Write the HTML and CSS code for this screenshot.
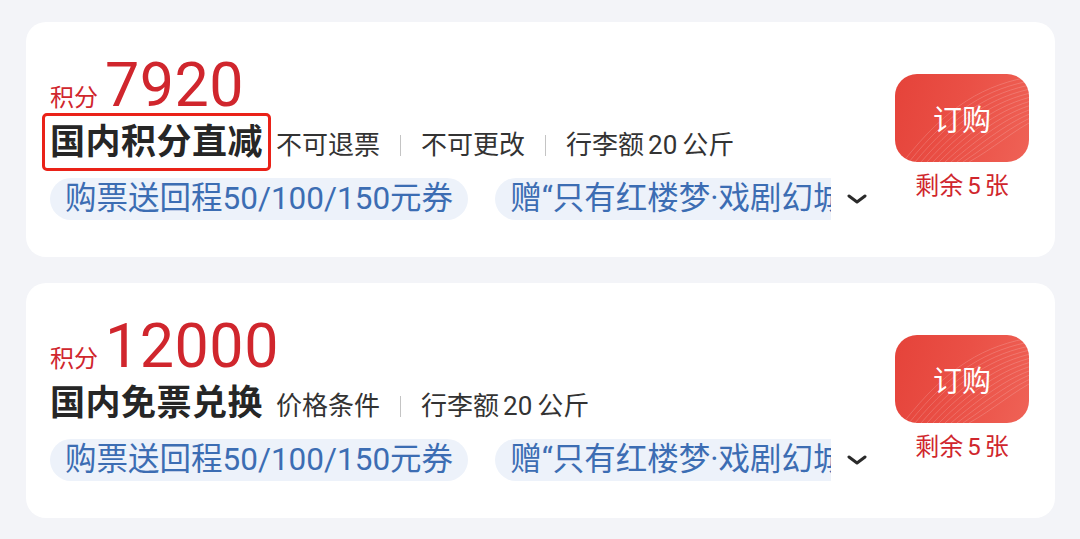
FILE: index.html
```html
<!DOCTYPE html>
<html lang="zh-CN">
<head>
<meta charset="utf-8">
<title>积分兑换</title>
<link rel="stylesheet" href="styles.css">
</head>
<body>
<div class="list">
  <div class="card">
    <div class="main">
      <div class="price"><span class="unit">积分</span><span class="num">7920</span></div>
      <div class="title-row">
        <span class="title marked">国内积分直减</span>
        <span class="rules">不可退票<i class="sep"></i>不可更改<i class="sep"></i>行李额<span class="n">20</span>公斤</span>
      </div>
      <div class="tags-row">
        <div class="tags">
          <span class="tag">购票送回程50/100/150元券</span>
          <span class="tag">赠“只有红楼梦·戏剧幻城”门票</span>
        </div>
        <svg class="chev" viewBox="0 0 20 10" width="20" height="10"><polyline points="2,2 10,8 18,2" fill="none" stroke="#2a2a2a" stroke-width="3" stroke-linecap="round" stroke-linejoin="round"/></svg>
      </div>
    </div>
    <div class="side">
      <div class="buy">
        <svg class="waves" viewBox="0 0 134 88" preserveAspectRatio="none">
          <g fill="none" stroke="#ffffff" stroke-opacity="0.22" stroke-width="0.8">
            <path d="M20 88 C60 40 95 18 140 10"/>
            <path d="M26 88 C64 44 98 22 140 14"/>
            <path d="M32 88 C68 48 101 26 140 18"/>
            <path d="M38 88 C72 52 104 30 140 22"/>
            <path d="M44 88 C76 56 107 34 140 26"/>
            <path d="M50 88 C80 60 110 38 140 30"/>
            <path d="M56 88 C84 64 113 42 140 34"/>
            <path d="M62 88 C88 68 116 46 140 38"/>
            <path d="M68 88 C92 72 119 50 140 42"/>
            <path d="M74 88 C96 76 122 54 140 46"/>
            <path d="M14 88 C56 36 92 14 140 6"/>
            <path d="M8 88 C52 32 89 10 140 2"/>
          </g>
        </svg>
        <span class="buy-label">订购</span>
      </div>
      <div class="remain">剩余<span class="n">5</span>张</div>
    </div>
  </div>

  <div class="card">
    <div class="main">
      <div class="price"><span class="unit">积分</span><span class="num">12000</span></div>
      <div class="title-row">
        <span class="title">国内免票兑换</span>
        <span class="rules">价格条件<i class="sep"></i>行李额<span class="n">20</span>公斤</span>
      </div>
      <div class="tags-row">
        <div class="tags">
          <span class="tag">购票送回程50/100/150元券</span>
          <span class="tag">赠“只有红楼梦·戏剧幻城”门票</span>
        </div>
        <svg class="chev" viewBox="0 0 20 10" width="20" height="10"><polyline points="2,2 10,8 18,2" fill="none" stroke="#2a2a2a" stroke-width="3" stroke-linecap="round" stroke-linejoin="round"/></svg>
      </div>
    </div>
    <div class="side">
      <div class="buy">
        <svg class="waves" viewBox="0 0 134 88" preserveAspectRatio="none">
          <g fill="none" stroke="#ffffff" stroke-opacity="0.22" stroke-width="0.8">
            <path d="M20 88 C60 40 95 18 140 10"/>
            <path d="M26 88 C64 44 98 22 140 14"/>
            <path d="M32 88 C68 48 101 26 140 18"/>
            <path d="M38 88 C72 52 104 30 140 22"/>
            <path d="M44 88 C76 56 107 34 140 26"/>
            <path d="M50 88 C80 60 110 38 140 30"/>
            <path d="M56 88 C84 64 113 42 140 34"/>
            <path d="M62 88 C88 68 116 46 140 38"/>
            <path d="M68 88 C92 72 119 50 140 42"/>
            <path d="M74 88 C96 76 122 54 140 46"/>
            <path d="M14 88 C56 36 92 14 140 6"/>
            <path d="M8 88 C52 32 89 10 140 2"/>
          </g>
        </svg>
        <span class="buy-label">订购</span>
      </div>
      <div class="remain">剩余<span class="n">5</span>张</div>
    </div>
  </div>
</div>
</body>
</html>
```

FILE: styles.css
```css
* {
  box-sizing: border-box;
  margin: 0;
  padding: 0;
}

html, body {
  width: 1080px;
  height: 539px;
  overflow: hidden;
}

body {
  background: #f3f4f8;
  font-family: "Roboto", "Noto Sans CJK SC", sans-serif;
  color: #333;
}

.list {
  display: flex;
  flex-direction: column;
  gap: 26px;
  padding: 22px 25px 0 26px;
}

.card {
  display: flex;
  height: 235px;
  background: #ffffff;
  border-radius: 20px;
  padding: 33px 26px 0 24px;
}

.main {
  flex: 1;
  min-width: 0;
  display: flex;
  flex-direction: column;
}

.price {
  display: flex;
  align-items: baseline;
  height: 60px;
  line-height: 60px;
  color: #d0262d;
}

.unit {
  font-size: 24px;
  font-family: "Noto Sans CJK SC", sans-serif;
}

.num {
  font-size: 61px;
  line-height: 60px;
  margin-left: 7px;
  font-weight: 400;
  letter-spacing: 0.5px;
}

.title-row {
  display: flex;
  align-items: baseline;
  margin-top: 4px;
  height: 40px;
  line-height: 40px;
}

.title {
  position: relative;
  font-size: 35px;
  font-weight: 700;
  color: #262626;
  letter-spacing: 0.5px;
  font-family: "Noto Sans CJK SC", sans-serif;
}

.title.marked::after {
  content: "";
  position: absolute;
  left: -8px;
  right: -8px;
  top: -6px;
  bottom: -12px;
  border: 3px solid #ea2218;
  border-radius: 5px;
}

.rules {
  margin-left: 13px;
  font-size: 26px;
  color: #333;
  white-space: nowrap;
}

.rules .n {
  margin: 0 5px 0 4px;
}

.sep {
  display: inline-block;
  width: 1px;
  height: 21px;
  background: #c4c4c4;
  margin: 0 20px;
  vertical-align: -2px;
}

.tags-row {
  display: flex;
  align-items: center;
  margin-top: 19px;
}

.tags {
  flex: 0 0 781px;
  display: flex;
  gap: 27px;
  overflow: hidden;
}

.tag {
  flex-shrink: 0;
  height: 42px;
  line-height: 42px;
  padding: 0 15px;
  border-radius: 21px;
  background: #edf2fa;
  color: #3c6db3;
  font-size: 31.5px;
  white-space: nowrap;
}

.chev {
  display: block;
  margin-left: 16px;
  width: 20px;
  height: 10px;
}

.side {
  width: 134px;
  flex-shrink: 0;
  padding-top: 19px;
  display: flex;
  flex-direction: column;
  align-items: center;
}

.buy {
  position: relative;
  width: 134px;
  height: 88px;
  border-radius: 22px;
  background: linear-gradient(105deg, #e5433a 0%, #ea5046 50%, #ef6256 100%);
  display: flex;
  align-items: center;
  justify-content: center;
  overflow: hidden;
}

.waves {
  position: absolute;
  left: 0;
  top: 0;
  width: 100%;
  height: 100%;
}

.buy-label {
  position: relative;
  color: #ffffff;
  font-size: 29px;
  font-family: "Noto Sans CJK SC", sans-serif;
  line-height: 1;
}

.remain {
  margin-top: 12px;
  font-size: 24px;
  line-height: 24px;
  color: #d0262d;
  white-space: nowrap;
}

.remain .n {
  margin: 0 4px;
}
```
